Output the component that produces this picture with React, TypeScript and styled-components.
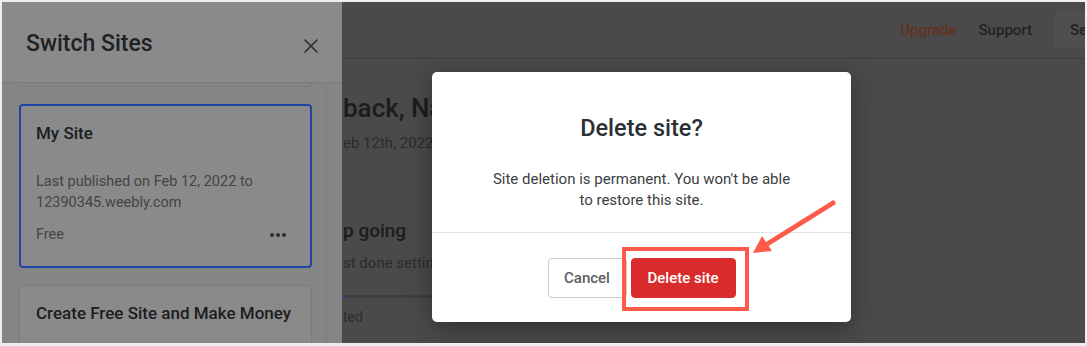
import React from "react";
import styled, { createGlobalStyle } from "styled-components";

const Global = createGlobalStyle`
  html, body { margin: 0; padding: 0; background: #f0f0f0; }
  body { font-family: Roboto, "Liberation Sans", Arial, sans-serif; }
  * { box-sizing: border-box; }
`;

const Frame = styled.div`
  position: relative;
  width: 1087px;
  height: 346px;
  border: 2px solid #eeeeee;
  border-bottom-width: 3px;
  overflow: hidden;
  display: flex;
  background: #4a4a4a;
`;

const Drawer = styled.aside`
  width: 340px;
  flex: none;
  background: #858585;
  display: flex;
  flex-direction: column;
`;

const DrawerHeader = styled.header`
  height: 81px;
  flex: none;
  background: #8a8a8a;
  border-bottom: 1px solid #7b7b7b;
  display: flex;
  align-items: center;
  justify-content: space-between;
  padding: 0 22px 0 24px;
`;

const DrawerTitle = styled.h2`
  margin: 3px 0 0;
  font-size: 23px;
  font-weight: 500;
  color: #1f2224;
`;

const CloseButton = styled.div`
  width: 18px;
  height: 18px;
  margin-top: 8px;
  display: flex;
  align-items: center;
  justify-content: center;
`;

const DrawerBody = styled.div`
  flex: 1;
  display: flex;
  min-height: 0;
`;

const CardList = styled.div`
  width: 325px;
  border-right: 1px solid #7d7d7d;
  padding: 0 14px 0 17px;
  display: flex;
  flex-direction: column;
  gap: 17px;
  overflow: hidden;
`;

const CardStub = styled.div`
  height: 4px;
  flex: none;
  border: 1px solid #7a7a7a;
  border-top: none;
  border-radius: 0 0 4px 4px;
`;

const SiteCard = styled.div<{ $active?: boolean }>`
  flex: none;
  border: ${(p) => (p.$active ? "2px solid #1d46a6" : "1px solid #7c7c7c")};
  border-radius: 4px;
  background: #8a8a8a;
  padding: ${(p) => (p.$active ? "17px 24px 0 15px" : "17px 20px 0 16px")};
  height: ${(p) => (p.$active ? "164px" : "80px")};
  display: flex;
  flex-direction: column;
`;

const SiteName = styled.div`
  font-size: 17px;
  font-weight: 500;
  color: #1b1d1f;
  line-height: 20px;
  white-space: nowrap;
`;

const SiteMeta = styled.div`
  margin-top: 28px;
  font-size: 14.5px;
  line-height: 21px;
  color: #444444;
`;

const SiteFooter = styled.div`
  margin-top: 12px;
  display: flex;
  justify-content: space-between;
  align-items: center;
  font-size: 14.5px;
  line-height: 20px;
  color: #444444;
`;

const Dots = styled.div`
  display: flex;
  gap: 2px;
  span {
    width: 4px;
    height: 4px;
    border-radius: 50%;
    background: #2e2e2e;
  }
`;

const Main = styled.main`
  flex: 1;
  display: flex;
  flex-direction: column;
  min-width: 0;
`;

const TopNav = styled.nav`
  height: 57px;
  flex: none;
  border-bottom: 1px solid #3d3d3d;
  display: flex;
  align-items: center;
  justify-content: flex-end;
  overflow: hidden;
`;

const NavLink = styled.span<{ $accent?: boolean }>`
  font-size: 15px;
  font-weight: 500;
  margin-right: 22px;
  color: ${(p) => (p.$accent ? "#66301a" : "#222222")};
`;

const NavButton = styled.div`
  height: 38px;
  width: 31px;
  background: #4f4f4f;
  border-radius: 4px 0 0 4px;
  display: flex;
  align-items: center;
  padding-left: 16px;
  font-size: 15px;
  font-weight: 500;
  color: #222222;
  overflow: hidden;
  white-space: nowrap;
`;

const Content = styled.section`
  padding: 34px 0 0 1px;
  display: flex;
  flex-direction: column;
  white-space: nowrap;
  overflow: hidden;
`;

const Greeting = styled.div`
  font-size: 26px;
  font-weight: 500;
  color: #1c1c1c;
  line-height: 30px;
`;

const SubText = styled.div<{ $top: number }>`
  margin-top: ${(p) => p.$top}px;
  font-size: 15px;
  color: #2c2c2c;
  line-height: 20px;
`;

const SectionTitle = styled.div`
  margin-top: 66px;
  font-size: 19px;
  font-weight: 500;
  color: #1c1c1c;
  line-height: 24px;
`;

const Progress = styled.div`
  margin-top: 22px;
  height: 3px;
  width: 100px;
  background: #3f3f3f;
  position: relative;
  &::before {
    content: "";
    position: absolute;
    left: 0;
    top: 0;
    width: 2px;
    height: 3px;
    background: #1d3c8a;
  }
`;

const Small = styled.div`
  margin-top: 11px;
  font-size: 14px;
  color: #2c2c2c;
`;

const Modal = styled.div`
  position: absolute;
  left: 430px;
  top: 70px;
  width: 419px;
  height: 250px;
  background: #ffffff;
  border-radius: 5px;
  box-shadow: 0 6px 24px rgba(0, 0, 0, 0.35);
  display: flex;
  flex-direction: column;
`;

const ModalBody = styled.div`
  height: 161px;
  border-bottom: 1px solid #e3e3e3;
  display: flex;
  flex-direction: column;
  align-items: center;
  padding-top: 42px;
`;

const ModalTitle = styled.h3`
  margin: 0;
  font-size: 23.5px;
  line-height: 28px;
  font-weight: 500;
  color: #2b3035;
`;

const ModalText = styled.p`
  margin: 27px 0 0;
  width: 310px;
  text-align: center;
  font-size: 15px;
  line-height: 21px;
  color: #3c4043;
`;

const ModalFooter = styled.div`
  flex: 1;
  display: flex;
  align-items: center;
  justify-content: center;
  gap: 4px;
  padding-top: 1px;
`;

const Button = styled.button<{ $danger?: boolean }>`
  height: 40px;
  width: ${(p) => (p.$danger ? "105px" : "79px")};
  padding: 0;
  border-radius: 4px;
  font-family: inherit;
  font-size: 15px;
  font-weight: 500;
  background: ${(p) => (p.$danger ? "#d92b2b" : "#ffffff")};
  color: ${(p) => (p.$danger ? "#ffffff" : "#5b6064")};
  border: 1px solid ${(p) => (p.$danger ? "#d92b2b" : "#c9c9c9")};
`;

const Highlight = styled.div`
  position: absolute;
  left: 620px;
  top: 245px;
  width: 127px;
  height: 64px;
  border: 4px solid #fe5a4a;
  pointer-events: none;
`;

const Arrow = styled.svg`
  position: absolute;
  left: 740px;
  top: 190px;
  pointer-events: none;
`;

export default function App() {
  return (
    <>
      <Global />
      <Frame>
        <Drawer>
          <DrawerHeader>
            <DrawerTitle>Switch Sites</DrawerTitle>
            <CloseButton>
              <svg width="14" height="14" viewBox="0 0 14 14">
                <path d="M1 1L13 13M13 1L1 13" stroke="#2e2e2e" strokeWidth="1.6" strokeLinecap="round" />
              </svg>
            </CloseButton>
          </DrawerHeader>
          <DrawerBody>
            <CardList>
              <CardStub />
              <SiteCard $active>
                <SiteName>My Site</SiteName>
                <SiteMeta>
                  Last published on Feb 12, 2022 to
                  <br />
                  12390345.weebly.com
                </SiteMeta>
                <SiteFooter>
                  <span>Free</span>
                  <Dots>
                    <span />
                    <span />
                    <span />
                  </Dots>
                </SiteFooter>
              </SiteCard>
              <SiteCard>
                <SiteName>Create Free Site and Make Money</SiteName>
              </SiteCard>
            </CardList>
          </DrawerBody>
        </Drawer>
        <Main>
          <TopNav>
            <NavLink $accent>Upgrade</NavLink>
            <NavLink>Support</NavLink>
            <NavButton>Settings</NavButton>
          </TopNav>
          <Content>
            <Greeting>back, Nancy</Greeting>
            <SubText $top={10}>eb 12th, 2022 to 12390345.weebly.com</SubText>
            <SectionTitle>p going</SectionTitle>
            <SubText $top={10}>st done setting up your site</SubText>
            <Progress />
            <Small>ted</Small>
          </Content>
        </Main>

        <Modal>
          <ModalBody>
            <ModalTitle>Delete site?</ModalTitle>
            <ModalText>Site deletion is permanent. You won't be able to restore this site.</ModalText>
          </ModalBody>
          <ModalFooter>
            <Button>Cancel</Button>
            <Button $danger>Delete site</Button>
          </ModalFooter>
        </Modal>
        <Highlight />
        <Arrow width="100" height="70" viewBox="0 0 100 70">
          <path d="M91 11 L22 54" stroke="#fe5a4a" strokeWidth="5" strokeLinecap="round" />
          <path d="M11 61 L20 44 L30 59 Z" fill="#fe5a4a" />
        </Arrow>
      </Frame>
    </>
  );
}
